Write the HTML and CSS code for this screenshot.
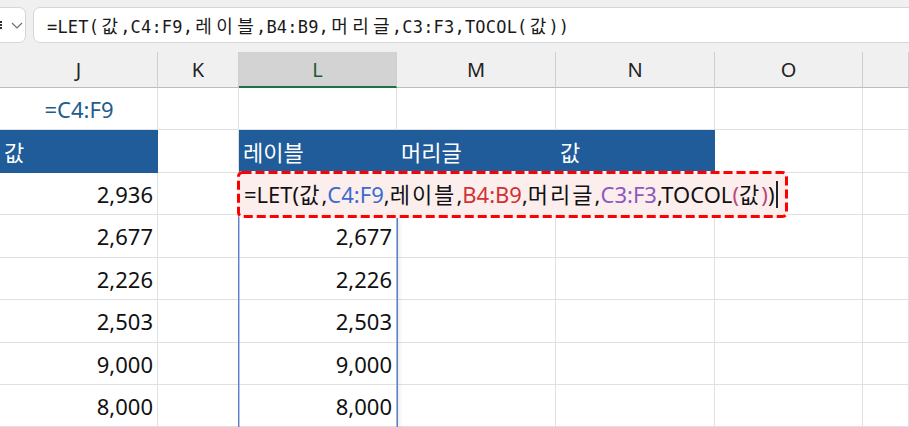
FILE: index.html
```html
<!DOCTYPE html>
<html lang="ko">
<head>
<meta charset="utf-8">
<link rel="stylesheet" href="styles.css">
</head>
<body>
<div class="app">
  <div class="fbar">
    <div class="namebox">
      <span class="nb-mark"></span>
      <svg class="chev" width="12" height="7" viewBox="0 0 12 7"><path d="M1 1 L6 6 L11 1" fill="none" stroke="#707070" stroke-width="1.2"/></svg>
    </div>
    <div class="formula">=LET(<span class="ko">값</span>,C4:F9,<span class="ko">레</span><span class="ko">이</span><span class="ko">블</span>,B4:B9,<span class="ko">머</span><span class="ko">리</span><span class="ko">글</span>,C3:F3,TOCOL(<span class="ko">값</span>))</div>
  </div>
  <div class="sheet">
    <div class="grid">
      <div class="ch">J</div>
      <div class="ch">K</div>
      <div class="ch sel">L</div>
      <div class="ch">M</div>
      <div class="ch">N</div>
      <div class="ch">O</div>
      <div class="ch"></div>

      <div class="c center ref">=C4:F9</div>
      <div class="c"></div><div class="c"></div><div class="c"></div><div class="c"></div><div class="c"></div><div class="c"></div>

      <div class="c hd">값</div>
      <div class="c"></div>
      <div class="c hd">레이블</div>
      <div class="c hd">머리글</div>
      <div class="c hd">값</div>
      <div class="c"></div><div class="c"></div>

      <div class="c num">2,936</div>
      <div class="c"></div><div class="c"></div><div class="c"></div><div class="c"></div><div class="c"></div><div class="c"></div>

      <div class="c num">2,677</div><div class="c"></div><div class="c num">2,677</div>
      <div class="c"></div><div class="c"></div><div class="c"></div><div class="c"></div>

      <div class="c num">2,226</div><div class="c"></div><div class="c num">2,226</div>
      <div class="c"></div><div class="c"></div><div class="c"></div><div class="c"></div>

      <div class="c num">2,503</div><div class="c"></div><div class="c num">2,503</div>
      <div class="c"></div><div class="c"></div><div class="c"></div><div class="c"></div>

      <div class="c num">9,000</div><div class="c"></div><div class="c num">9,000</div>
      <div class="c"></div><div class="c"></div><div class="c"></div><div class="c"></div>

      <div class="c num">8,000</div><div class="c"></div><div class="c num">8,000</div>
      <div class="c"></div><div class="c"></div><div class="c"></div><div class="c"></div>
    </div>
    <div class="selection"></div>
    <div class="editor">
      <svg class="dash" width="551" height="47" viewBox="0 0 551 47"><rect x="1.5" y="1.5" width="548" height="44" rx="4" ry="4" fill="none" stroke="#ff0000" stroke-width="3" stroke-dasharray="9 4"/></svg>
      <span class="etext">=LET(<span class="ek">값</span>,<span class="t-blue">C4:F9</span>,<span class="ek">레이블</span>,<span class="t-red">B4:B9</span>,<span class="ek">머리글</span>,<span class="t-purple">C3:F3</span>,TOCOL<span class="t-pink">(</span><span class="ek">값</span><span class="t-pink">)</span>)</span><span class="caret"></span>
    </div>
  </div>
</div>
</body>
</html>
```
FILE: styles.css
```css
html, body {
  margin: 0;
  padding: 0;
  background: #ffffff;
}
.app {
  width: 909px;
  height: 427px;
  overflow: hidden;
  font-family: "Noto Sans", "Noto Sans CJK KR", sans-serif;
}
.fbar {
  height: 52px;
  box-sizing: border-box;
  padding-top: 7px;
  background: #f0f0f0;
  display: flex;
  gap: 7px;
  overflow: hidden;
}
.namebox {
  flex: 0 0 auto;
  width: 40px;
  margin-left: -14px;
  height: 36px;
  box-sizing: border-box;
  background: #ffffff;
  border: 1px solid #d6d6d6;
  border-radius: 7px;
  display: flex;
  align-items: center;
  justify-content: flex-end;
  padding-right: 2px;
}
.nb-mark {
  width: 3px;
  height: 8px;
  margin-right: 8px;
  border-left: 2px dotted #303030;
  box-sizing: border-box;
}
.chev { display: block; }
.formula {
  flex: 0 0 auto;
  width: 900px;
  height: 36px;
  box-sizing: border-box;
  background: #ffffff;
  border: 1px solid #d6d6d6;
  border-radius: 7px;
  padding-left: 13px;
  font-family: "DejaVu Sans Mono", "Liberation Mono", "Noto Sans CJK KR", monospace;
  font-size: 17px;
  letter-spacing: 0.2px;
  line-height: 34px;
  color: #1a1a1a;
  white-space: nowrap;
}
.formula .ko {
  font-family: "Noto Sans CJK KR", sans-serif;
  font-size: 18px;
  letter-spacing: 0;
  padding: 0 2.2px 0 2.2px;
}
.sheet {
  position: relative;
}
.grid {
  display: grid;
  grid-template-columns: 158px 81px 158px 159px 159px 148px 46px;
  grid-template-rows: 36px 42px 43px 42px 43px 42px 43px 42px 42px;
}
.ch {
  background: #f0f0f0;
  border-bottom: 1px solid #bcbcbc;
  border-right: 1px solid #cfcfcf;
  box-sizing: border-box;
  display: flex;
  align-items: center;
  justify-content: center;
  font-size: 20px;
  color: #222222;
}
.ch.sel {
  background: #d3d3d3;
  border-bottom: 2px solid #1e7145;
  color: #185c37;
}
.c {
  box-sizing: border-box;
  border-right: 1px solid #e0e0e0;
  border-bottom: 1px solid #e0e0e0;
  display: flex;
  align-items: center;
  padding: 0 4px 0 5px;
  font-size: 22px;
  color: #111111;
  white-space: nowrap;
}
.c.center { justify-content: center; }
.c.num { justify-content: flex-end; }
.c.ref { color: #1f5c8e; }
.c.hd {
  background: #1f5c99;
  border-color: #1f5c99;
  color: #ffffff;
  padding-left: 4px;
}
.selection {
  position: absolute;
  left: 238px;
  top: 121px;
  width: 160px;
  height: 260px;
  box-sizing: border-box;
  border-left: 1px solid #5a80cc;
  border-right: 1px solid #5a80cc;
  box-shadow: inset 1px 0 0 rgba(90,128,204,0.45), inset -1px 0 0 rgba(90,128,204,0.45), 4px 0 5px -3px rgba(0,0,0,0.10);
}
.editor {
  position: absolute;
  left: 237px;
  top: 119px;
  width: 551px;
  height: 47px;
  box-sizing: border-box;
  border-radius: 5px;
  background: #fdeeee;
  padding-left: 7px;
  font-size: 22px;
  color: #111111;
  white-space: nowrap;
  display: flex;
  align-items: center;
}
.dash {
  position: absolute;
  left: 0;
  top: 0;
  display: block;
}
.etext {
  line-height: 41px;
}
.editor .ek {
  letter-spacing: 2px;
}
.t-blue { color: #3b6cd0; }
.t-red { color: #d13234; }
.t-purple { color: #8f58c0; }
.t-pink { color: #b84a80; }
.caret {
  display: inline-block;
  width: 2px;
  height: 27px;
  background: #222222;
  margin-left: 2px;
}
```
